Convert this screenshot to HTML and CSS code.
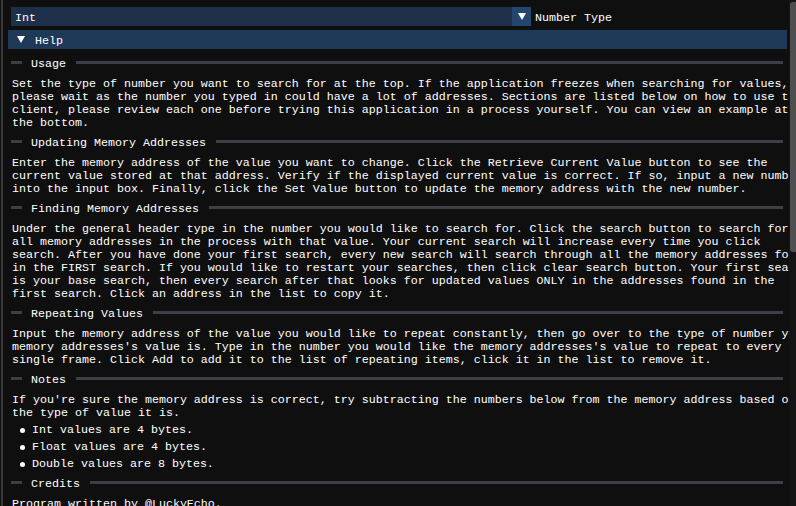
FILE: index.html
```html
<!DOCTYPE html>
<html>
<head>
<meta charset="utf-8">
<link rel="stylesheet" href="styles.css">
</head>
<body>
<div class="app">
  <div class="main">
    <div class="combo-row">
      <div class="combo">
        <div class="combo-frame">Int</div>
        <div class="combo-btn"><span class="tri tri-sm"></span></div>
      </div>
      <span class="label">Number Type</span>
    </div>
    <div class="header"><span class="tri tri-lg"></span><span class="header-text">Help</span></div>

    <div class="sep"><span class="sep-lead"></span><span class="sep-text">Usage</span><span class="sep-line"></span></div>
    <div class="para">
      <div class="ln">Set the type of number you want to search for at the top. If the application freezes when searching for values,</div>
      <div class="ln">please wait as the number you typed in could have a lot of addresses. Sections are listed below on how to use the</div>
      <div class="ln">client, please review each one before trying this application in a process yourself. You can view an example at</div>
      <div class="ln">the bottom.</div>
    </div>

    <div class="sep"><span class="sep-lead"></span><span class="sep-text">Updating Memory Addresses</span><span class="sep-line"></span></div>
    <div class="para">
      <div class="ln">Enter the memory address of the value you want to change. Click the Retrieve Current Value button to see the</div>
      <div class="ln">current value stored at that address. Verify if the displayed current value is correct. If so, input a new number</div>
      <div class="ln">into the input box. Finally, click the Set Value button to update the memory address with the new number.</div>
    </div>

    <div class="sep"><span class="sep-lead"></span><span class="sep-text">Finding Memory Addresses</span><span class="sep-line"></span></div>
    <div class="para">
      <div class="ln">Under the general header type in the number you would like to search for. Click the search button to search for</div>
      <div class="ln">all memory addresses in the process with that value. Your current search will increase every time you click</div>
      <div class="ln">search. After you have done your first search, every new search will search through all the memory addresses found</div>
      <div class="ln">in the FIRST search. If you would like to restart your searches, then click clear search button. Your first search</div>
      <div class="ln">is your base search, then every search after that looks for updated values ONLY in the addresses found in the</div>
      <div class="ln">first search. Click an address in the list to copy it.</div>
    </div>

    <div class="sep"><span class="sep-lead"></span><span class="sep-text">Repeating Values</span><span class="sep-line"></span></div>
    <div class="para">
      <div class="ln">Input the memory address of the value you would like to repeat constantly, then go over to the type of number you</div>
      <div class="ln">memory addresses's value is. Type in the number you would like the memory addresses's value to repeat to every</div>
      <div class="ln">single frame. Click Add to add it to the list of repeating items, click it in the list to remove it.</div>
    </div>

    <div class="sep"><span class="sep-lead"></span><span class="sep-text">Notes</span><span class="sep-line"></span></div>
    <div class="para">
      <div class="ln">If you're sure the memory address is correct, try subtracting the numbers below from the memory address based on</div>
      <div class="ln">the type of value it is.</div>
    </div>
    <ul class="bullets">
      <li class="bullet"><span class="dot"></span><span class="btext">Int values are 4 bytes.</span></li>
      <li class="bullet"><span class="dot"></span><span class="btext">Float values are 4 bytes.</span></li>
      <li class="bullet"><span class="dot"></span><span class="btext">Double values are 8 bytes.</span></li>
    </ul>

    <div class="sep"><span class="sep-lead"></span><span class="sep-text">Credits</span><span class="sep-line"></span></div>
    <div class="para">
      <div class="ln">Program written by @LuckyEcho.</div>
    </div>
  </div>
  <div class="scrollbar"><div class="grab"></div></div>
</div>
</body>
</html>
```
FILE: styles.css
```css
html, body {
  margin: 0;
  padding: 0;
  background: #0f0f0f;
  overflow: hidden;
}
body {
  font-family: "Liberation Mono", "DejaVu Sans Mono", monospace;
  font-size: 11.6667px;
  line-height: 13px;
  color: #ffffff;
}
.app {
  display: flex;
  width: 796px;
  height: 506px;
  overflow: hidden;
}
.main {
  flex: none;
  width: 788px;
  margin-left: 1px;
  border-left: 2px solid #3a3a3a;
  overflow: hidden;
  padding-top: 7px;
  box-sizing: border-box;
}
.combo-row {
  display: flex;
  align-items: center;
  margin-left: 8px;
  height: 19px;
}
.combo {
  display: flex;
  height: 19px;
}
.combo-frame {
  width: 501px;
  height: 19px;
  background: #1d2f49;
  box-sizing: border-box;
  padding: 5px 4px 0 4px;
}
.combo-btn {
  width: 19px;
  height: 19px;
  background: #24456d;
  display: flex;
  align-items: center;
  justify-content: center;
}
.label {
  margin-left: 4px;
  padding-top: 4px;
}
.tri {
  display: block;
  width: 0;
  height: 0;
  border-style: solid;
  border-color: #ffffff transparent transparent transparent;
}
.tri-sm {
  border-width: 7px 4px 0 4px;
}
.tri-lg {
  border-width: 7px 4.5px 0 4.5px;
  margin-left: 9px;
}
.header {
  margin: 4px 2px 0 5px;
  height: 19px;
  background: #1f3958;
  display: flex;
  align-items: center;
}
.header-text {
  margin-left: 10px;
  padding-top: 4px;
}
.sep {
  display: flex;
  align-items: center;
  height: 19px;
  margin: 2px 6px 0 8px;
}
.main > .header + .sep {
  margin-top: 4px;
}
.sep-lead {
  width: 11px;
  height: 3px;
  background: #3e3e47;
  flex: none;
}
.sep-text {
  margin: 0 10px 0 9px;
  padding-top: 4px;
  white-space: pre;
}
.sep-line {
  flex: 1;
  height: 3px;
  background: #3e3e47;
}
.para {
  margin-top: 6px;
  padding-left: 9px;
}
.ln {
  white-space: pre;
  overflow: hidden;
  height: 13px;
}
.bullets {
  list-style: none;
  margin: 0;
  padding: 0;
}
.bullet {
  display: flex;
  align-items: center;
  height: 13px;
  margin-top: 2px;
  padding-left: 17px;
  white-space: pre;
}
.bullet + .bullet {
  margin-top: 4px;
}
.bullets + .sep {
  margin-top: 4px;
}
.dot {
  width: 5px;
  height: 5px;
  border-radius: 50%;
  background: #ffffff;
  margin-right: 7px;
  flex: none;
  margin-bottom: -4px;
}
.btext {
  padding-top: 4px;
}
.scrollbar {
  flex: none;
  width: 7px;
  height: 506px;
  background: #141414;
}
.grab {
  margin: 2px 0 0 1px;
  width: 6px;
  height: 250px;
  background: #4f4f4f;
  border-radius: 3px 0 0 3px;
}
```
